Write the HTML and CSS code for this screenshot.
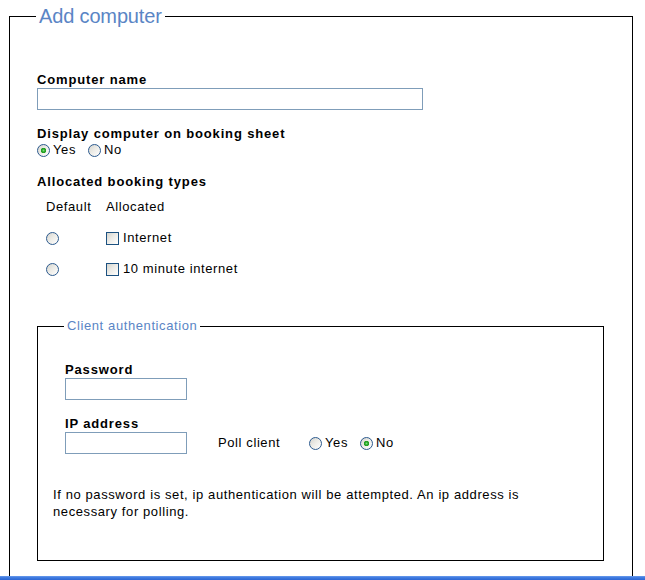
FILE: index.html
```html
<!DOCTYPE html>
<html lang="en">
<head>
<meta charset="utf-8">
<title>Add computer</title>
<link rel="stylesheet" href="styles.css">
</head>
<body>
<form class="page">
  <fieldset class="outer">
    <legend class="outer-legend">Add computer</legend>

    <div class="field first">
      <label class="label" for="cname">Computer name</label>
      <input class="text wide" id="cname" type="text">
    </div>

    <div class="field">
      <div class="label">Display computer on booking sheet</div>
      <div class="options">
        <label class="opt"><input class="radio" type="radio" name="display" checked><span>Yes</span></label>
        <label class="opt"><input class="radio" type="radio" name="display"><span>No</span></label>
      </div>
    </div>

    <div class="field">
      <div class="label">Allocated booking types</div>
      <div class="types">
        <div class="types-row">
          <span class="col-default">Default</span>
          <span class="col-alloc">Allocated</span>
        </div>
        <div class="types-row">
          <span class="col-default"><input class="radio" type="radio" name="default"></span>
          <label class="col-alloc opt tight"><input class="check" type="checkbox"><span>Internet</span></label>
        </div>
        <div class="types-row">
          <span class="col-default"><input class="radio" type="radio" name="default"></span>
          <label class="col-alloc opt tight"><input class="check" type="checkbox"><span>10 minute internet</span></label>
        </div>
      </div>
    </div>

    <fieldset class="inner">
      <legend class="inner-legend">Client authentication</legend>

      <div class="field sub first-sub">
        <label class="label" for="pw">Password</label>
        <input class="text short" id="pw" type="password">
      </div>

      <div class="field sub">
        <label class="label" for="ip">IP address</label>
        <div class="ip-row">
          <input class="text short" id="ip" type="text">
          <span class="poll-label">Poll client</span>
          <div class="options poll">
            <label class="opt"><input class="radio" type="radio" name="poll"><span>Yes</span></label>
            <label class="opt"><input class="radio" type="radio" name="poll" checked><span>No</span></label>
          </div>
        </div>
      </div>

      <p class="note">If no password is set, ip authentication will be attempted. An ip address is necessary for polling.</p>
    </fieldset>
  </fieldset>
</form>
<div class="taskbar"></div>
</body>
</html>
```

FILE: styles.css
```css
html, body {
  margin: 0;
  padding: 0;
  background: #fff;
  height: 100%;
  overflow: hidden;
}

body {
  font-family: "Liberation Sans", Arial, sans-serif;
  font-size: 13px;
  line-height: 16px;
  letter-spacing: 0.6px;
  color: #000;
}

.page {
  margin: 0;
}

.outer {
  margin: 5px 12px 0 9px;
  padding: 0 28px 40px 27px;
  border: 1px solid #000;
  min-width: 0;
}

.outer-legend {
  margin-left: -1px;
  padding: 0 3px;
  font-size: 20px;
  line-height: 22px;
  letter-spacing: -0.15px;
  color: #5a85c5;
}

.field {
  margin-top: 16px;
}

.field.first {
  margin-top: 45px;
}

.label {
  display: block;
  font-weight: bold;
  letter-spacing: 0.85px;
  line-height: 16px;
}

.text {
  display: block;
  box-sizing: border-box;
  height: 22px;
  margin: 0;
  padding: 2px 3px;
  border: 1px solid #7f9db9;
  background: #fff;
  font: inherit;
}

.text.wide {
  width: 386px;
}

.text.short {
  width: 122px;
}

.options {
  display: flex;
  gap: 12px;
}

.opt {
  display: flex;
  align-items: center;
  gap: 3px;
  height: 16px;
}

.opt.tight {
  gap: 4px;
}

.radio,
.check {
  appearance: none;
  -webkit-appearance: none;
  box-sizing: border-box;
  width: 13px;
  height: 13px;
  margin: 0;
  border: 1px solid #2c5a8e;
  background: linear-gradient(135deg, #d4d4ce 0%, #ecebe6 45%, #ffffff 100%);
  flex: none;
}

.radio {
  border-radius: 50%;
}

.radio:checked {
  background:
    radial-gradient(circle at 50% 50%, #7be07b 0, #2aa82a 1.5px, #1f9a1f 2.5px, rgba(0,0,0,0) 3px),
    linear-gradient(135deg, #d4d4ce 0%, #ecebe6 45%, #ffffff 100%);
}

.check {
  border-color: #1c5180;
}

.types {
  display: flex;
  flex-direction: column;
  gap: 15px;
  margin-top: 9px;
  padding-left: 9px;
}

.types-row {
  display: flex;
  align-items: center;
  height: 16px;
}

.col-default {
  display: flex;
  align-items: center;
  width: 60px;
}

.inner {
  margin: 41px 0 0 0;
  padding: 0 15px 40px 15px;
  border: 1px solid #000;
  min-width: 0;
}

.inner-legend {
  margin-left: 11px;
  padding: 0 3px;
  font-size: 13px;
  line-height: 16px;
  color: #5a85c5;
}

.field.sub {
  margin-left: 12px;
}

.field.first-sub {
  margin-top: 28px;
}

.ip-row {
  display: flex;
  align-items: center;
}

.poll-label {
  margin-left: 31px;
  width: 91px;
}

.options.poll {
  gap: 12px;
}

.note {
  margin: 32px 0 0 0;
  line-height: 17px;
  max-width: 520px;
}

.taskbar {
  position: fixed;
  left: 0;
  right: 0;
  bottom: 0;
  height: 4px;
  background: linear-gradient(to bottom, #6b9cec 0%, #3f7be0 40%, #2d66d3 100%);
}
```
